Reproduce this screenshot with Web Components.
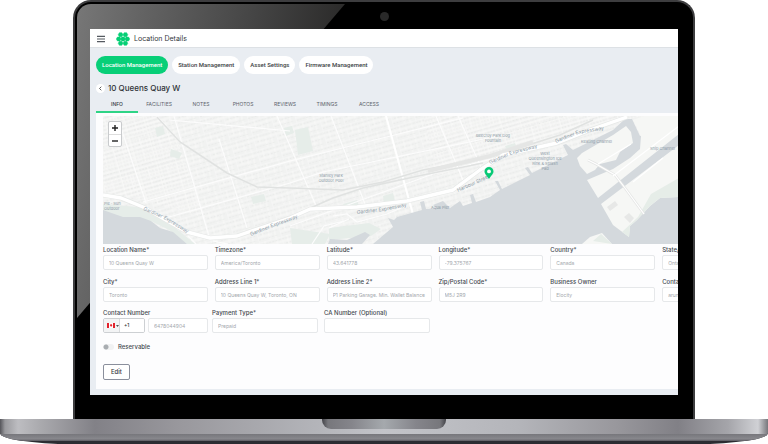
<!DOCTYPE html>
<html lang="en">
<head>
<meta charset="utf-8">
<meta name="viewport" content="width=device-width, initial-scale=1">
<title>Location Details</title>
<style>
body { margin: 0; background: #fff; font-family: Inter, "Liberation Sans", sans-serif; color: #3c4148; }
</style>
</head>
<body>
<laptop-frame>
  <location-app></location-app>
</laptop-frame>

<script>
const define = (name, html, setup) => {
  const template = document.createElement('template');
  template.innerHTML = html;
  customElements.define(name, class extends HTMLElement {
    constructor() {
      super();
      this.attachShadow({ mode: 'open' }).append(template.content.cloneNode(true));
    }
    connectedCallback() { if (setup) setup(this, this.shadowRoot); }
  });
};

define('laptop-frame', `
<style>
:host { display: block; overflow: hidden; }
.lid { position: relative; box-sizing: border-box; margin: 0 73px; padding: 27px 15px 24px; background: #000;
  border: 2px solid #3d3d3f; border-bottom: 0; border-radius: 18px 18px 0 0; }
.glare { position: absolute; inset: 2px; border-radius: 14px 14px 0 0; overflow: hidden; }
.glare::before { content: ""; display: block; width: 268px; height: 314px; clip-path: polygon(0 0, 100% 0, 0 100%);
  background: linear-gradient(100deg, #777 0, #646464 20%, #454545 55%, #1c1b1a 100%); }
.camera { position: absolute; top: 10px; left: calc(50% - 4px); width: 9px; height: 9px; border-radius: 50%; background: #292929; }
.screen { position: relative; overflow: hidden; background: #e9edf2; }
.base { height: 25px; overflow: hidden; border-radius: 0 0 72px 72px / 0 0 11px 11px; background: #2c2c32; }
.deck { display: flex; justify-content: center; height: 15px;
  background: linear-gradient(90deg, #55555a 0, #9a9a9e 5px, #bdbdc1 18px, #aaaaae 40px, #828187 95px, #99989d 180px, #b4b5ba 320px, #c3c4c9 50%, #b4b5ba calc(100% - 250px), #98979c calc(100% - 150px), #818086 calc(100% - 90px), #a5a5aa calc(100% - 40px), #d0d1d5 calc(100% - 10px), #77777c 100%); }
.notch { width: 124px; height: 10px; border-radius: 0 0 9px 9px;
  background: linear-gradient(90deg, #444449 0, #77777c 6px, #85858b 30px, #a5a9ad 50%, #85858b calc(100% - 30px), #77777c calc(100% - 6px), #444449 100%); }
.under { height: 7px; background: linear-gradient(#77777c, #88888d 70%, #5d5c63); }
</style>
<div class="lid">
  <div class="glare"></div>
  <div class="camera"></div>
  <div class="screen"><slot></slot></div>
</div>
<div class="base"><div class="deck"><div class="notch"></div></div><div class="under"></div></div>
`);

define('location-app', `
<style>
:host { display: block; padding-bottom: 6px; }
main { padding-left: 6px; }
.card { background: #fdfdfe; padding: 3px 0 9px 7px; overflow: hidden; }
</style>
<app-header></app-header>
<main>
  <section-nav></section-nav>
  <page-title>10 Queens Quay W</page-title>
  <info-tabs></info-tabs>
  <div class="card">
    <city-map></city-map>
    <location-form></location-form>
  </div>
</main>
`);

define('app-header', `
<style>
:host { display: flex; align-items: center; gap: 11px; height: 17px; padding: 1px 0 0 7px; background: #fff; border-bottom: 1px solid #dde1e5; }
button { border: 0; padding: 0; background: none; display: flex; }
.brand { display: flex; align-items: center; gap: 4px; }
h1 { margin: 0; font-size: 7px; line-height: 9px; font-weight: 400; color: #33373c; }
</style>
<button aria-label="Menu"><svg width="8" height="8" viewBox="0 0 8 8"><path d="M0 1.4h8M0 4h8M0 6.6h8" stroke="#555a60" stroke-width="1.1"/></svg></button>
<div class="brand">
<svg width="14" height="14" viewBox="0 0 14 14" aria-hidden="true">
  <defs><path id="h" d="M-1.2-2h2.4L2.4 0 1.2 2h-2.4L-2.4 0z" fill="#05cf75" stroke="#05cf75" stroke-width=".5" stroke-linejoin="round"/></defs>
  <use href="#h" x="4.6" y="2.700"/><use href="#h" x="9.4" y="2.700"/>
  <use href="#h" x="2.700" y="7"/><use href="#h" x="11.300" y="7"/>
  <use href="#h" x="4.6" y="11.300"/><use href="#h" x="9.4" y="11.300"/>
  <use href="#h" x="7" y="7"/>
</svg>
<h1>Location Details</h1>
</div>
`);

define('section-nav', `
<style>
:host { display: block; padding-top: 8px; }
nav { display: flex; gap: 4px; }
button { font: 500 6px/18px Roboto, "Liberation Sans", sans-serif; color: #3b3f45; background: #fff; border: 0; border-radius: 9px; padding: 0 6px; white-space: nowrap; }
button.on { background: #08cf78; color: #fff; }
</style>
<nav><button class="on">Location Management</button><button>Station Management</button><button>Asset Settings</button><button>Firmware Management</button></nav>
`);

define('page-title', `
<style>
:host { display: flex; align-items: center; gap: 3px; padding-top: 8px; height: 12px; }
button { display: flex; align-items: center; justify-content: center; width: 9px; height: 9px; padding: 0; border: 0; border-radius: 50%; background: #fff; }
h2 { margin: 0; font-size: 8px; line-height: 12px; font-weight: 500; color: #2f3237; }
</style>
<button aria-label="Back"><svg width="5" height="5" viewBox="0 0 5 5"><path d="M3.3.7 1.5 2.5l1.8 1.8" fill="none" stroke="#333" stroke-width=".8"/></svg></button>
<h2><slot></slot></h2>
`);

define('info-tabs', `
<style>
:host { display: block; padding-top: 3px; }
div { display: flex; }
button { width: 42px; height: 16px; padding: 0; border: 0; border-bottom: 2px solid transparent; background: none; font: 400 5px/14px Inter, "Liberation Sans", sans-serif; color: #5c626a; }
button.on { color: #33373c; font-weight: 500; border-color: #2fd486; }
</style>
<div role="tablist"><button role="tab" class="on" aria-selected="true">INFO</button><button role="tab">FACILITIES</button><button role="tab">NOTES</button><button role="tab">PHOTOS</button><button role="tab">REVIEWS</button><button role="tab">TIMINGS</button><button role="tab">ACCESS</button></div>
`);

define('city-map', `
<style>
:host { display: block; position: relative; height: 128px; overflow: hidden; background: #f0f1f0; }
svg.map { display: block; width: 100%; height: 100%; }
.zoom { position: absolute; left: 5px; top: 5px; width: 12px; border: 1px solid #c9cbcd; border-radius: 2px; background: #fff; }
.zoom button { display: flex; align-items: center; justify-content: center; width: 12px; height: 12px; padding: 0; border: 0; background: none; }
.zoom button + button { border-top: 1px solid #ddd; }
text { font: 400 4px Inter, "Liberation Sans", sans-serif; fill: #8d9ba7; }
.road { font-size: 5px; }
</style>
<svg class="map" viewBox="0 0 576 128" preserveAspectRatio="xMinYMin slice" role="img" aria-label="Map of the Toronto waterfront">
  <defs>
    <pattern id="streets" width="23" height="15" patternUnits="userSpaceOnUse" patternTransform="rotate(-16)">
      <path d="M0 0h23M0 5h23M0 10h15M0 0v15M6 0v10M12 5v10M18 0v15" fill="none" stroke="#f9f9f8" stroke-width=".9"/>
      <path d="M0 2.500h22M3 7.500h18M1 12.500h20" fill="none" stroke="#e9eae9" stroke-width=".8" stroke-dasharray="2 1.300"/>
    </pattern>
    <pattern id="blocks" width="19" height="32" patternUnits="userSpaceOnUse" patternTransform="rotate(-16)">
      <path d="M0 0h19M0 4h19M0 8h19M0 12h19M0 16h19M0 20h19M0 24h19M0 28h19M0 0v32M10 0v16" fill="none" stroke="#f9f9f8" stroke-width="1"/>
      <path d="M1 2h17M1 6h17M1 10h17M1 14h17M1 18h17M1 22h17M1 26h17M1 30h17" fill="none" stroke="#e6e7e6" stroke-width=".7" stroke-dasharray="1.600 1.400"/>
    </pattern>
    <path id="gw" d="M40 94 61 103 92 122"/>
    <path id="gm" d="M148 120 170 111 208 97"/>
    <path id="gc" d="M254 98 280 95 316 88"/>
    <path id="ge" d="M387 48 410 38 444 29"/>
    <path id="gf" d="M453 27 475 18 510 12"/>
    <path id="hb" d="M355 76 373 68 396 57"/>
  </defs>
  <path d="M0 0h576v128H0z" fill="#f1f2f1"/>
  <path d="M0 0h576v128H0z" fill="url(#streets)"/>
  <path d="M0 0h55l20 27 28 75L40 84 0 76zM320 0h220l-60 12-85 28-60 20z" fill="url(#blocks)"/>
  <g fill="#e6ede9">
    <path d="m52 12 8-2 2 8-8 3zM192 14l13-3 5 24-15 4zM68 33l11 4-3 6-9-3zM148 81l13-3 2 7-13 3zM280 80l10-3 2 8-11 3zM187 112l40 6-5 10h-33zM226 112l40-5 12 6-10 7-42 4z"/>
    <path d="M0 88l36 3 28 14 28 23H84l-18-14-18-9H0zM181 12l8-2 2 7-8 3zM240 88l14-4 2 6-13 3zM402 30l10-3 2 7-9 2z"/>
  </g>
  <g fill="none" stroke="#fcfcfc" stroke-width="1.200">
    <path d="M54 0 77 26M18 12 43 87M71 0 107 124M116 23 144 112M174 0 214 92M228 0 262 88M333 0 350 40 364 74M355 0 382 60"/>
    <path d="M40 86 187 45 360 2M66 101 187 67 220 56 395 20M66 4 187 15M187 110 330 58 440 30M85 120l8 8M110 125l15 3"/>
    <path d="m230 100 14-2 10 8 30-8 14-6M226 112l20-9M209 128l12-18 20-5"/>
  </g>
  <path d="M283 0 306 84 310 98" fill="none" stroke="#fff" stroke-width="2"/>
  <path d="M54 1 77 26 124 57 154 71 187 72 240 74 280 66 320 54 387 41 457 19 490 4M187 101 230 82 260 72 320 59 380 47" fill="none" stroke="#e0e2e1" stroke-width="1.500"/>
  <path d="M325 55 387 40 430 26" fill="none" stroke="#e5e6e5" stroke-width="4"/>
  <path d="M0 94 20 101 37 101 48 105 57 112 70 116 84 128H0z" fill="#d4d9dd"/>
  <path d="m225 128 2-5 17 1 18-8 5 3-8 9z" fill="#d4d9dd"/>
  <path d="M270 128 290 111 285 102 291 104 294 101 319 94 317 86 321 85 323 93 334 92 330 89 340 85 347 92 357 85 360 90 369 87 367 79 370 78 373 86 387 81 397 74 392 65 395 65 399 73 427 59 422 52 425 51 429 57 465 39 460 29 463 28 470 34 510 14 522 3 529 3 537 20 576 15V128z" fill="#d4d9dd"/>
  <g fill="#f6f7f5">
    <path d="M474 42 479 37 510 19 523 10 528 16 530 27 517 36 513 44 497 48 492 54 484 58 477 50z"/>
    <path d="M484 64 510 53 527 42 537 33 538 20 530 4 541 0H576V18L495 82z"/>
    <path d="M498 88 576 29V81L557 82 547 90 534 104 527 110 526 121 510 109z"/>
    <path d="M479 128 487 121 499 117 509 128z"/>
  </g>
  <path d="M576 62V81L557 82 547 90 534 104 527 110 526 121 519 116 535 101 548 78zM490 125 498 118 509 128z" fill="#e6ede8"/>
  <path d="m485 44 8 4 19 11 10 13 19 26" fill="none" stroke="#e5e6e5" stroke-width="2.600"/>
  <path d="m485 44 8 4 19 11 10 13 19 26M495 48 528 28M510 60 576 10M530 66 560 42" fill="none" stroke="#fff" stroke-width="1.200"/>
  <path d="m504 91 8-6 3 4-8 6zM521 101l5-4 5 5-4 5z" fill="#e7e8e7"/>
  <g fill="none" stroke-linejoin="round">
    <path d="M0 79 18 82 40 91 84 116 107 122 134 120 187 102 207 93 254 91 304 85 350 74 377 54 400 39 454 27 487 14 524 1" stroke="#e6e8e7" stroke-width="4.600"/>
    <path d="M0 79 18 82 40 91 84 116 107 122 134 120 187 102 207 93 254 91 304 85 350 74 377 54 400 39 454 27 487 14 524 1" stroke="#fff" stroke-width="3.400"/>
  </g>
  <text class="road"><textPath href="#gw">Gardiner Expressway</textPath></text>
  <text class="road"><textPath href="#gm">Gardiner Expressway</textPath></text>
  <text class="road"><textPath href="#gc">Gardiner Expressway</textPath></text>
  <text class="road"><textPath href="#ge">Gardiner Expressway</textPath></text>
  <text class="road"><textPath href="#gf">Gardiner Expressway</textPath></text>
  <text class="road"><textPath href="#hb">Harbour Street</textPath></text>
  <text x="1" y="89">Ple · Sun</text><text x="1" y="94">Outdoor</text>
  <text text-anchor="middle" x="228" y="61">Stanley Park</text><text text-anchor="middle" x="228" y="66">Outdoor Pool</text>
  <text text-anchor="middle" x="390" y="21">Beecroy Park Dog</text><text text-anchor="middle" x="390" y="26">Fountain</text>
  <text text-anchor="middle" x="442" y="39">West</text><text text-anchor="middle" x="442" y="44">Queensington Ice</text><text text-anchor="middle" x="442" y="49">Rink &amp; Splash</text><text text-anchor="middle" x="442" y="54">Pad</text>
  <text x="478" y="27">Keating Channel</text>
  <text x="547" y="34">Ship Channel</text>
  <text x="328" y="93">Aqua Pier</text>
  <path d="M386 63C383.500 59 381.500 57.700 381.500 55.400a4.500 4.500 0 0 1 9 0C390.500 57.700 388.500 59 386 63z" fill="#08c976"/>
  <circle cx="386" cy="55.400" r="1.900" fill="#fff"/>
</svg>
<div class="zoom">
  <button aria-label="Zoom in"><svg width="6" height="6" viewBox="0 0 6 6"><path d="M3 0v6M0 3h6" stroke="#222" stroke-width="1.400"/></svg></button>
  <button aria-label="Zoom out"><svg width="6" height="6" viewBox="0 0 6 6"><path d="M0 3h6" stroke="#222" stroke-width="1.400"/></svg></button>
</div>
`);

define('form-field', `
<style>
:host { display: block; min-width: 0; }
label { display: block; font-size: 6px; line-height: 8px; padding-bottom: 1px; font-weight: 500; color: #44494f; white-space: nowrap; }
input { display: block; box-sizing: border-box; width: 100%; height: 15px; margin: 0; padding: 0 5px; border: 1px solid #e6e8ea; border-radius: 2px; background: #fff; font: 400 5px/13px Inter, "Liberation Sans", sans-serif; color: #a3a7ac; }
</style>
<label for="field"></label>
<input id="field" type="text">
`, (host, root) => {
  root.querySelector('label').textContent = host.getAttribute('label');
  root.querySelector('input').value = host.getAttribute('value') || '';
});

define('phone-field', `
<style>
:host { display: block; min-width: 0; }
label { display: block; font-size: 6px; line-height: 8px; padding-bottom: 1px; font-weight: 500; color: #44494f; }
.row { display: flex; gap: 3px; }
.code { display: flex; box-sizing: border-box; width: 42px; height: 15px; border: 1px solid #cdd0d3; border-radius: 2px; background: #fff; overflow: hidden; }
.code button { display: flex; align-items: center; gap: 1px; width: 16px; padding: 0 0 0 3px; border: 0; border-right: 1px solid #d9dbdd; background: #f3f4f5; }
input { box-sizing: border-box; min-width: 0; flex: 1; margin: 0; padding: 0 4px; border: 0; background: #fff; font: 500 5px/13px Inter, "Liberation Sans", sans-serif; color: #333; }
.number { height: 15px; padding: 0 5px; border: 1px solid #e6e8ea; border-radius: 2px; font-weight: 400; color: #a3a7ac; }
</style>
<label for="number">Contact Number</label>
<div class="row">
  <div class="code">
    <button aria-label="Country: Canada"><svg width="8" height="5" viewBox="0 0 8 5"><path d="M0 0h8v5H0z" fill="#fff"/><path d="M0 0h2v5H0zM6 0h2v5H6zM4 .6l.4.8.7-.2-.1.900.4.3-1 .9V4h-.6v-.7l-1-.9.4-.3-.1-.9.600.2z" fill="#e3222b"/></svg><svg width="3" height="2" viewBox="0 0 3 2"><path d="M0 0h3L1.500 2z" fill="#555"/></svg></button>
    <input type="text" value="+1" aria-label="Dialling code">
  </div>
  <input class="number" id="number" type="text" value="6478044904">
</div>
`);

define('toggle-switch', `
<style>
:host { display: block; }
label { display: flex; align-items: center; gap: 4px; font-size: 6px; line-height: 8px; font-weight: 500; color: #44494f; }
input { appearance: none; width: 11px; height: 6px; margin: 0; border-radius: 3px; background: radial-gradient(circle at 3px 3px, #a9adb1 2px, #f1f2f3 3px); }
</style>
<label><input type="checkbox" role="switch"><slot></slot></label>
`);

define('location-form', `
<style>
:host { display: block; padding-top: 2px; }
.grid { display: grid; grid-template-columns: repeat(6, 1fr); gap: 8px 7px; width: calc(100% + 89px); }
.last { display: flex; gap: 6px; width: calc(100% + 89px); padding-top: 7px; }
.last > phone-field { flex: 0 0 105px; }
.last > form-field { flex: 0 0 106px; }
.last > phone-field + form-field { margin-left: -2px; }
toggle-switch { padding-top: 10px; }
button { margin-top: 13px; height: 16px; padding: 0 7px; border: 1px solid #8a8f9c; border-radius: 2px; background: #fff; font: 500 6px/14px Inter, "Liberation Sans", sans-serif; color: #33373c; display: block; }
</style>
<form>
<div class="grid">
  <form-field label="Location Name*" value="10 Queens Quay W"></form-field>
  <form-field label="Timezone*" value="America/Toronto"></form-field>
  <form-field label="Latitude*" value="43.641778"></form-field>
  <form-field label="Longitude*" value="-79.375767"></form-field>
  <form-field label="Country*" value="Canada"></form-field>
  <form-field label="State/Province*" value="Ontario"></form-field>
  <form-field label="City*" value="Toronto"></form-field>
  <form-field label="Address Line 1*" value="10 Queens Quay W, Toronto, ON"></form-field>
  <form-field label="Address Line 2*" value="P1 Parking Garage. Min. Wallet Balance"></form-field>
  <form-field label="Zip/Postal Code*" value="M5J 2R9"></form-field>
  <form-field label="Business Owner" value="Elocity"></form-field>
  <form-field label="Contact" value="arun"></form-field>
</div>
<div class="last">
  <phone-field></phone-field>
  <form-field label="Payment Type*" value="Prepaid"></form-field>
  <form-field label="CA Number (Optional)"></form-field>
</div>
<toggle-switch>Reservable</toggle-switch>
<button type="button">Edit</button>
</form>
`);
</script>
</body>
</html>
